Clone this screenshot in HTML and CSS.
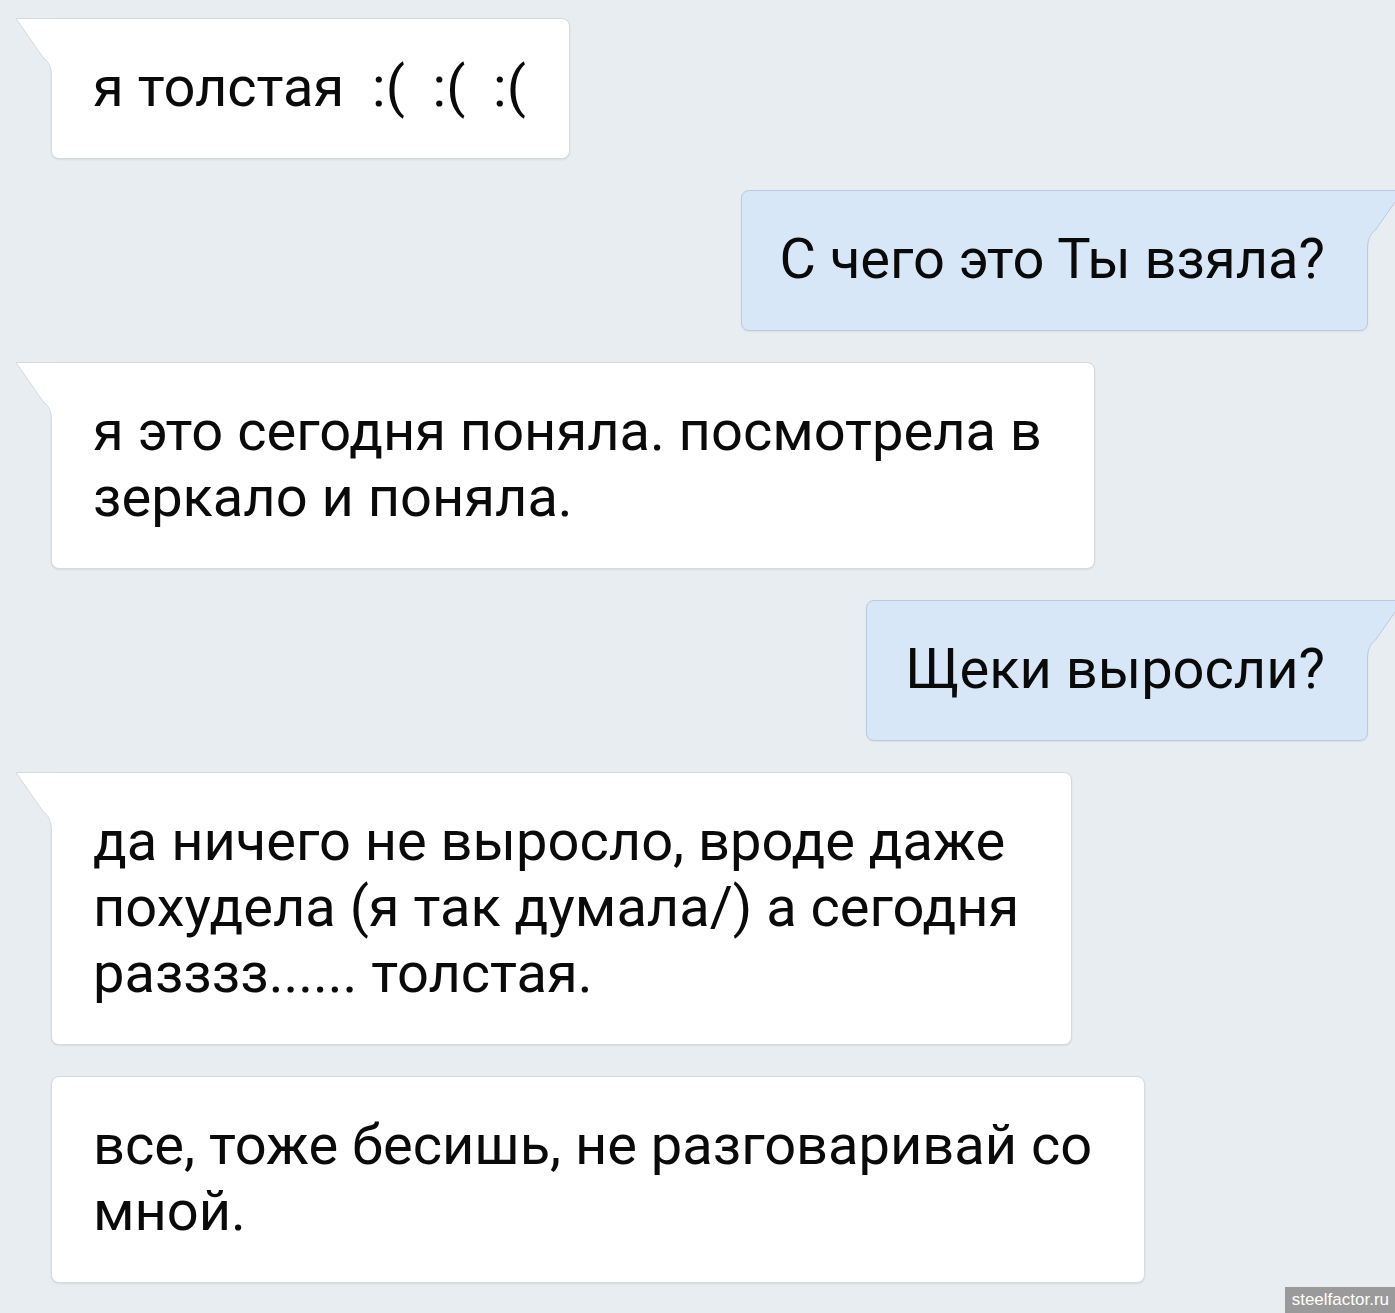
FILE: index.html
```html
<!DOCTYPE html>
<html lang="ru">
<head>
<meta charset="utf-8">
<title>Чат</title>
<link rel="stylesheet" href="styles.css">
</head>
<body>
<div class="chat">
  <div class="msg in short">
    <svg class="tail" width="38" height="64" viewBox="0 0 38 64"><path class="tf" d="M1,0.5 L28.5,40 C34,44 36.5,50 36.5,59 V64 H38 V0.5 Z"/><path class="ts" d="M38,0.5 H1 L28.5,40 C34,44 36.5,50 36.5,59 V64"/></svg>
    я толстая&nbsp; :(&nbsp; :(&nbsp; :(
  </div>
  <div class="msg out">
    <svg class="tail" width="38" height="64" viewBox="0 0 38 64"><path class="tf" d="M1,0.5 L28.5,40 C34,44 36.5,50 36.5,59 V64 H38 V0.5 Z"/><path class="ts" d="M38,0.5 H1 L28.5,40 C34,44 36.5,50 36.5,59 V64"/></svg>
    С чего это Ты взяла?
  </div>
  <div class="msg in multi">
    <svg class="tail" width="38" height="64" viewBox="0 0 38 64"><path class="tf" d="M1,0.5 L28.5,40 C34,44 36.5,50 36.5,59 V64 H38 V0.5 Z"/><path class="ts" d="M38,0.5 H1 L28.5,40 C34,44 36.5,50 36.5,59 V64"/></svg>
    я это сегодня поняла. посмотрела в<br>зеркало и поняла.
  </div>
  <div class="msg out">
    <svg class="tail" width="38" height="64" viewBox="0 0 38 64"><path class="tf" d="M1,0.5 L28.5,40 C34,44 36.5,50 36.5,59 V64 H38 V0.5 Z"/><path class="ts" d="M38,0.5 H1 L28.5,40 C34,44 36.5,50 36.5,59 V64"/></svg>
    Щеки выросли?
  </div>
  <div class="msg in multi">
    <svg class="tail" width="38" height="64" viewBox="0 0 38 64"><path class="tf" d="M1,0.5 L28.5,40 C34,44 36.5,50 36.5,59 V64 H38 V0.5 Z"/><path class="ts" d="M38,0.5 H1 L28.5,40 C34,44 36.5,50 36.5,59 V64"/></svg>
    да ничего не выросло, вроде даже<br>похудела (я так думала/) а сегодня<br>разззз...... толстая.
  </div>
  <div class="msg in plain multi">
    все, тоже бесишь, не разговаривай со<br>мной.
  </div>
</div>
<div class="watermark">steelfactor.ru</div>
</body>
</html>
```
FILE: styles.css
```css
html, body {
  margin: 0;
  padding: 0;
  overflow: hidden;
  background: #e8edf1;
}
body {
  width: 1395px;
  height: 1313px;
  position: relative;
  font-family: Roboto, "Noto Sans", sans-serif;
}
.chat {
  display: flex;
  flex-direction: column;
  align-items: flex-start;
  gap: 31px;
  padding-top: 18px;
}
.msg {
  position: relative;
  box-sizing: border-box;
  font-size: 56px;
  line-height: 66px;
  color: #0a0a0a;
  padding: 35px 42px 38px 41px;
  border-radius: 8px;
  white-space: nowrap;
}
.msg.multi {
  padding-right: 52px;
}
.msg.short {
  padding-right: 43px;
}
.msg.in {
  margin-left: 51px;
  background: #fff;
  border: 1px solid #d4dade;
  border-top-left-radius: 0;
  box-shadow: 0 1px 2px rgba(0,0,0,0.08);
}
.msg.in.plain {
  border-top-left-radius: 8px;
}
.msg.out {
  align-self: flex-end;
  margin-right: 27px;
  padding-left: 38px;
  background: #d8e7f8;
  border: 1px solid #b8cbe0;
  border-top-right-radius: 0;
  box-shadow: 0 1px 2px rgba(0,0,0,0.06);
}
.tail {
  position: absolute;
  top: -1px;
  display: block;
}
.in .tail { left: -37px; }
.out .tail { right: -37px; transform: scaleX(-1); }
.in .tf { fill: #fff; }
.in .ts { fill: none; stroke: #d4dade; stroke-width: 1; }
.out .tf { fill: #d8e7f8; }
.out .ts { fill: none; stroke: #b8cbe0; stroke-width: 1; }
.watermark {
  position: absolute;
  right: 0;
  bottom: 0;
  background: #9a9a9a;
  color: #fff;
  font-family: "Liberation Sans", Arial, sans-serif;
  font-size: 17px;
  line-height: 26px;
  padding: 0 6px 0 7px;
}
```
